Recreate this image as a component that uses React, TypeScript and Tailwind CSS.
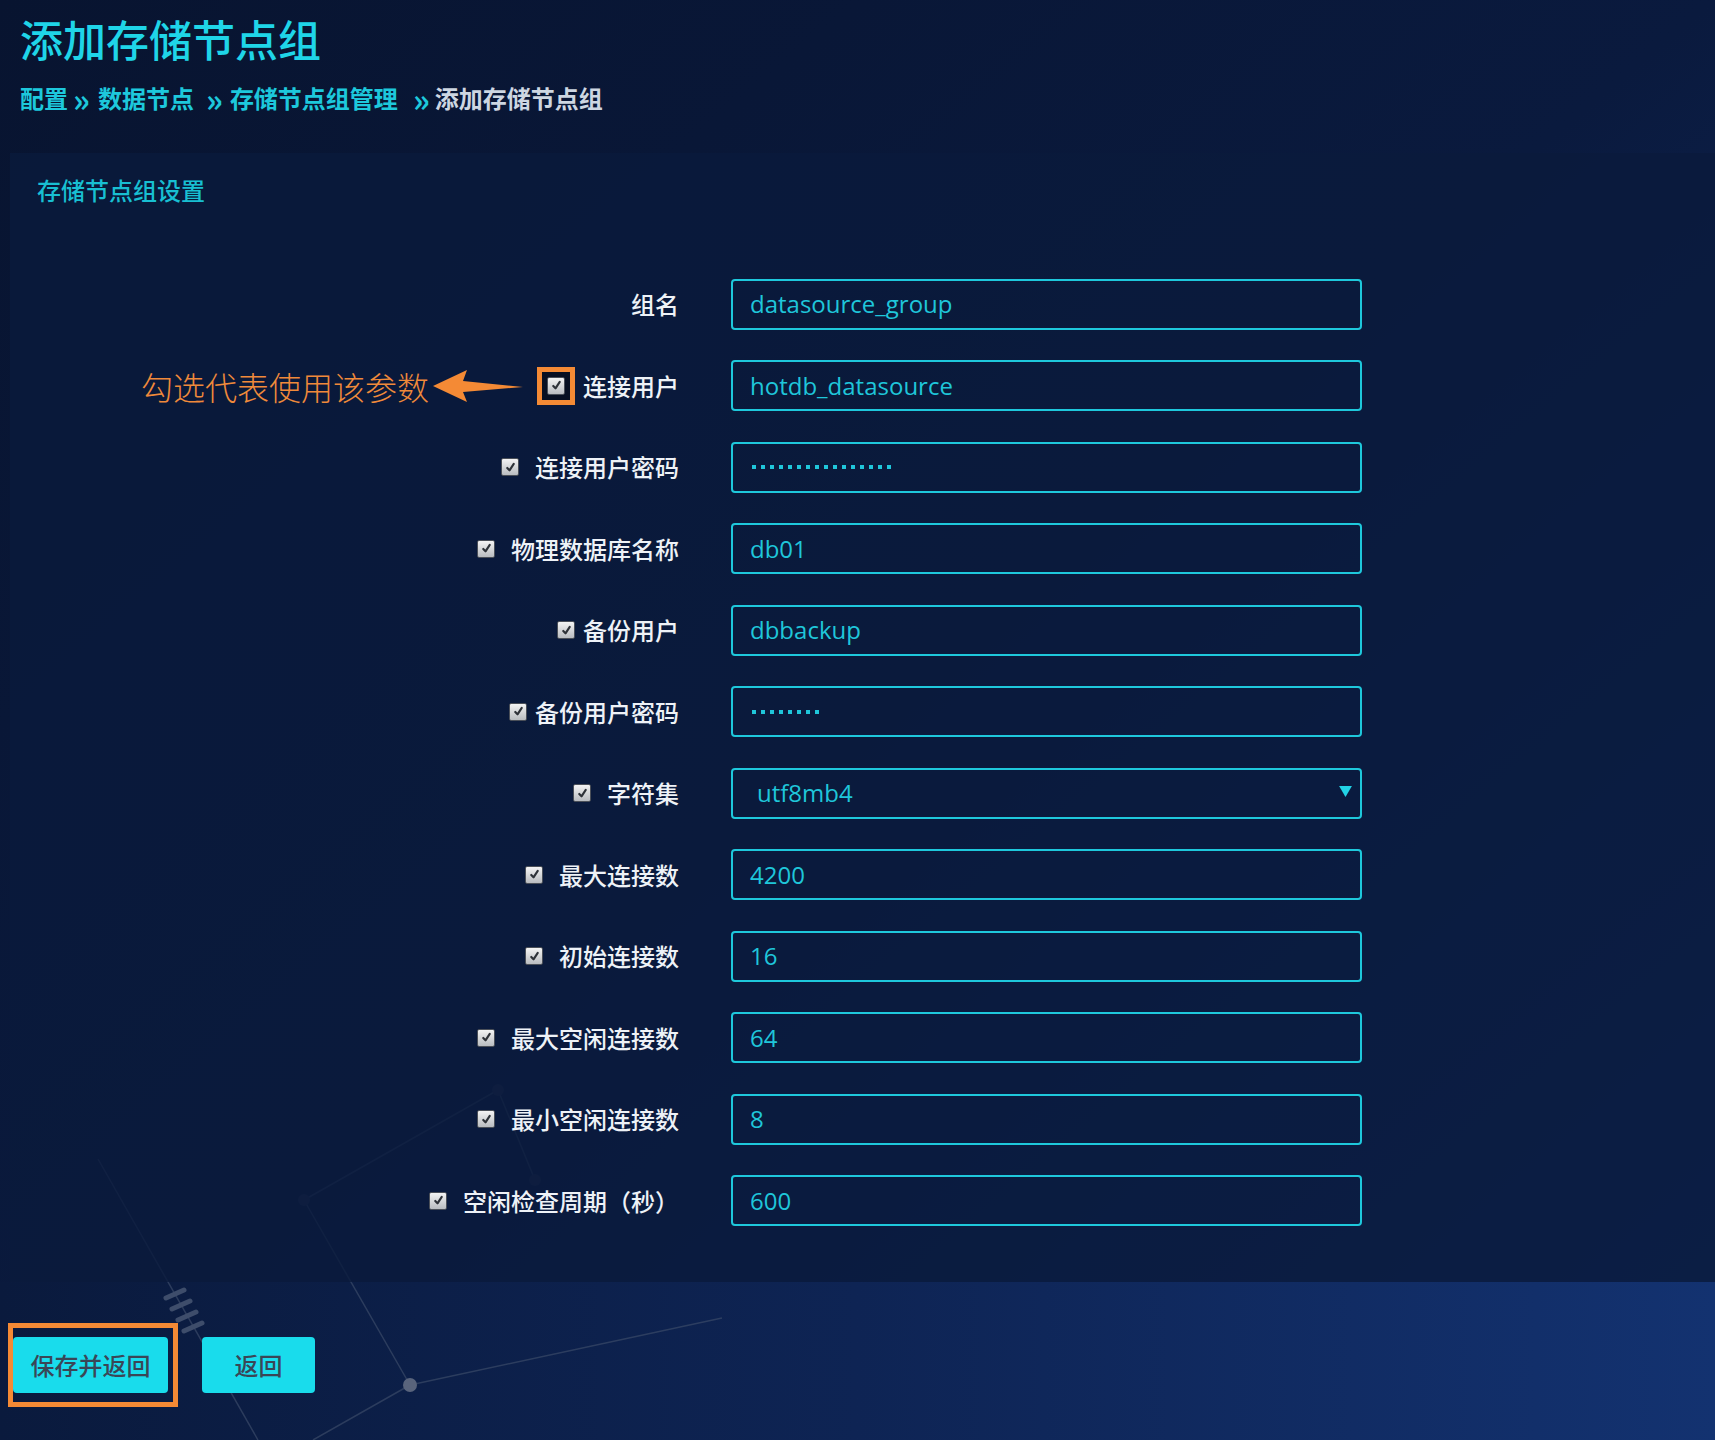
import React from 'react';

interface Field {
  label: string;
  value: string;
  checkbox?: boolean;
  tight?: boolean;
  password?: number;
  select?: boolean;
  hint?: boolean;
}

const fields: Field[] = [
  { label: '组名', value: 'datasource_group' },
  { label: '连接用户', value: 'hotdb_datasource', checkbox: true, hint: true },
  { label: '连接用户密码', value: '', checkbox: true, password: 16 },
  { label: '物理数据库名称', value: 'db01', checkbox: true },
  { label: '备份用户', value: 'dbbackup', checkbox: true, tight: true },
  { label: '备份用户密码', value: '', checkbox: true, tight: true, password: 8 },
  { label: '字符集', value: 'utf8mb4', checkbox: true, select: true },
  { label: '最大连接数', value: '4200', checkbox: true },
  { label: '初始连接数', value: '16', checkbox: true },
  { label: '最大空闲连接数', value: '64', checkbox: true },
  { label: '最小空闲连接数', value: '8', checkbox: true },
  { label: '空闲检查周期（秒）', value: '600', checkbox: true },
];

const CheckBox = () => (
  <span className="flex h-[18px] w-[18px] items-center justify-center rounded-[2px] border border-[#4a4f58] bg-gradient-to-b from-[#f4f4f4] to-[#b9bcc0]">
    <svg viewBox="0 0 16 16" className="h-[13px] w-[13px]">
      <path d="M4 8.5 L6.8 11.5 L12 3.5" fill="none" stroke="#2e3238" strokeWidth="2.6" strokeLinecap="round" strokeLinejoin="round" />
    </svg>
  </span>
);

const Arrow = () => (
  <svg viewBox="0 0 90 34" className="h-[34px] w-[90px]">
    <path d="M0 17 L34 1 L30 12 L90 18 L30 23 L34 33 Z" fill="#f48a35" />
  </svg>
);

const Background = () => (
  <svg className="pointer-events-none absolute inset-0 h-full w-full" viewBox="0 0 1715 1440" preserveAspectRatio="none">
    <g stroke="#3a4a68" strokeWidth="1.5" fill="none" opacity="0.7">
      <line x1="98" y1="1159" x2="258" y2="1440" />
      <line x1="304" y1="1200" x2="410" y2="1385" />
      <line x1="304" y1="1200" x2="498" y2="1090" />
      <line x1="410" y1="1385" x2="313" y2="1440" />
      <line x1="410" y1="1385" x2="722" y2="1318" />
      <line x1="498" y1="1090" x2="535" y2="1180" />
    </g>
    <g stroke="#3e4d6b" strokeWidth="5" strokeLinecap="round">
      <line x1="166" y1="1298" x2="184" y2="1290" />
      <line x1="172" y1="1309" x2="190" y2="1301" />
      <line x1="178" y1="1320" x2="196" y2="1312" />
      <line x1="184" y1="1331" x2="202" y2="1323" />
    </g>
    <circle cx="410" cy="1385" r="7" fill="#59647c" />
    <circle cx="304" cy="1200" r="6" fill="#1e2c4c" />
    <circle cx="498" cy="1090" r="6" fill="#1e2c4c" />
    <circle cx="535" cy="1180" r="6" fill="#1e2c4c" />
  </svg>
);

const App: React.FC = () => {
  return (
    <div className="relative min-h-[1440px] w-full overflow-hidden bg-gradient-to-br from-[#081430] via-[#0a1a3e] to-[#12306c] font-['Noto_Sans_CJK_SC',sans-serif]">
      <div className="absolute inset-x-0 bottom-0 h-[158px] bg-gradient-to-r from-[#0a1a3d] via-[#0e2454] to-[#133270]" />
      <Background />

      <div className="relative">
        <h1 className="ml-[20px] mt-[14px] text-[43px] font-medium leading-[48px] text-[#1fd5e8]">添加存储节点组</h1>

        <div className="ml-[20px] mt-[21px] flex h-[30px] items-center text-[24px] font-bold leading-[30px] text-[#1dc8dc]">
          <span>配置</span>
          <span className="ml-[5px] text-[32px] leading-[30px]">»</span>
          <span className="ml-[8px]">数据节点</span>
          <span className="ml-[12px] text-[32px] leading-[30px]">»</span>
          <span className="ml-[7px]">存储节点组管理</span>
          <span className="ml-[15px] text-[32px] leading-[30px]">»</span>
          <span className="ml-[5px] text-[#cdd6e2]">添加存储节点组</span>
        </div>

        <section className="ml-[10px] mt-[40px] bg-[#0a1a3c]/80 pb-[56px] pt-[22px]">
          <h2 className="ml-[27px] text-[24px] font-medium leading-[30px] text-[#18bfd2]">存储节点组设置</h2>

          <div className="mt-[74px] flex flex-col gap-[31.5px]">
            {fields.map((f) => (
              <div key={f.label} className="flex h-[50px] items-center">
                <div className="flex w-[669px] items-center justify-end text-[24px] font-medium leading-[30px] text-[#eef2f7]">
                  {f.hint && (
                    <>
                      <span className="text-[32px] font-light leading-[38px] text-[#f08a3a]">勾选代表使用该参数</span>
                      <span className="ml-[4px] flex">
                        <Arrow />
                      </span>
                      <span className="ml-[14px] flex h-[38px] w-[38px] items-center justify-center border-[5px] border-[#f48a35] bg-[#070f22]">
                        <CheckBox />
                      </span>
                      <span className="ml-[8px]">{f.label}</span>
                    </>
                  )}
                  {!f.hint && f.checkbox && (
                    <>
                      <CheckBox />
                      <span className={f.tight ? 'ml-[8px]' : 'ml-[16px]'}>{f.label}</span>
                    </>
                  )}
                  {!f.hint && !f.checkbox && <span>{f.label}</span>}
                </div>

                <div className="relative ml-[52px] flex h-[51px] w-[631px] items-center rounded-[4px] border-2 border-[#1ec8dc] font-['Open_Sans',sans-serif] text-[24px] text-[#1fc6da]">
                  {f.password ? (
                    <div className="ml-[19px] flex gap-[5px]">
                      {Array.from({ length: f.password }).map((_, i) => (
                        <span key={i} className="h-[4px] w-[4px] bg-[#1fc6da]" />
                      ))}
                    </div>
                  ) : (
                    <span className={f.select ? 'ml-[24px]' : 'ml-[17px]'}>{f.value}</span>
                  )}
                  {f.select && (
                    <svg viewBox="0 0 14 12" className="absolute right-[8px] top-[16px] h-[11px] w-[13px]">
                      <path d="M0 0 H14 L7 12 Z" fill="#22d3e6" />
                    </svg>
                  )}
                </div>
              </div>
            ))}
          </div>
        </section>

        <div className="ml-[13px] mt-[55px] flex items-center">
          <div className="relative">
            <span className="absolute bottom-[-14px] left-[-5px] right-[-10px] top-[-14px] border-[5px] border-[#f48a35]" />
            <button className="relative h-[56px] w-[155px] rounded-[4px] bg-[#19dcec] text-[24px] font-medium text-[#3a4656]">保存并返回</button>
          </div>
          <button className="ml-[34px] h-[56px] w-[113px] rounded-[4px] bg-[#19dcec] text-[24px] font-medium text-[#3a4656]">返回</button>
        </div>
      </div>
    </div>
  );
};

export default App;
